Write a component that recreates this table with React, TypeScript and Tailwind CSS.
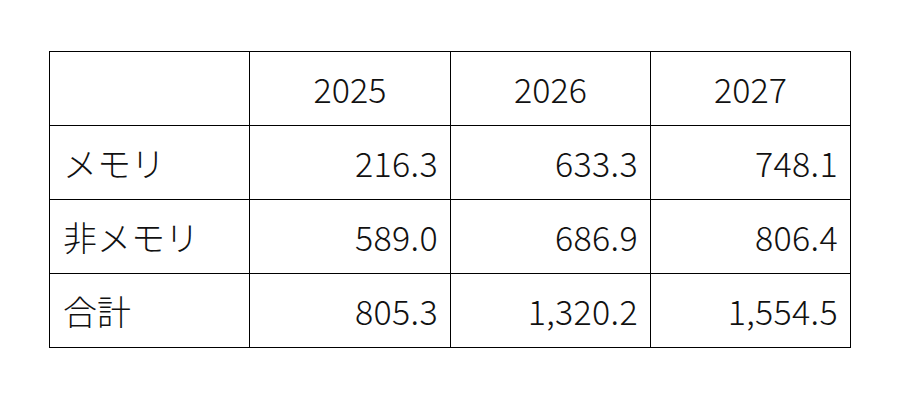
const header = ["2025", "2026", "2027"];

const rows = [
  { label: "メモリ", values: ["216.3", "633.3", "748.1"] },
  { label: "非メモリ", values: ["589.0", "686.9", "806.4"] },
  { label: "合計", values: ["805.3", "1,320.2", "1,554.5"] },
];

export default function App() {
  return (
    <div
      className="w-[900px] h-[400px] bg-white pt-[51px] pl-[49px]"
      style={{ fontFamily: '"Noto Sans CJK JP", "Noto Sans", sans-serif' }}
    >
      <table className="table-fixed border-collapse w-[801px] text-[34px] text-[#111] font-light">
        <colgroup>
          <col className="w-[200px]" />
          <col className="w-[201px]" />
          <col className="w-[200px]" />
          <col className="w-[200px]" />
        </colgroup>
        <thead>
          <tr className="h-[74px]">
            <th className="border border-black font-light" />
            {header.map((y) => (
              <th key={y} className="border border-black font-light text-center p-0">
                {y}
              </th>
            ))}
          </tr>
        </thead>
        <tbody>
          {rows.map((r) => (
            <tr key={r.label} className="h-[74px]">
              <td className="border border-black p-0 pl-[13px]">{r.label}</td>
              {r.values.map((v, i) => (
                <td key={i} className="border border-black text-right p-0 pr-[12px] tracking-[0.01em]">
                  {v}
                </td>
              ))}
            </tr>
          ))}
        </tbody>
      </table>
    </div>
  );
}
